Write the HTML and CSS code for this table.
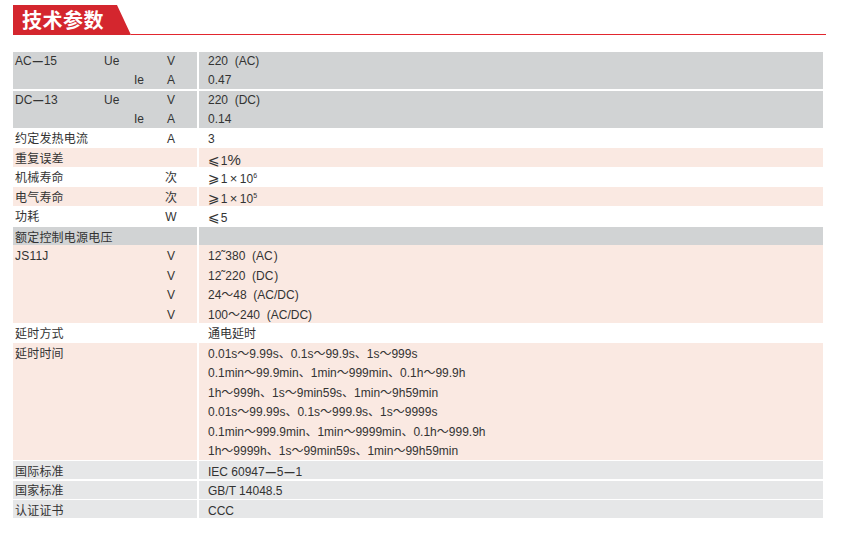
FILE: index.html
```html
<!DOCTYPE html>
<html lang="zh">
<head>
<meta charset="utf-8">
<title>技术参数</title>
<link rel="stylesheet" href="styles.css">
</head>
<body>
<div class="page">
  <div class="head">
    <div class="tab">技术参数</div>
    <div class="rule"></div>
  </div>

  <div class="table">
    <div class="grp grey pair">
      <div class="l">
        <div class="ln"><span class="c1">AC<span class="dash">—</span>15</span><span class="c2">Ue</span><span class="c3"></span><span class="u">V</span></div>
        <div class="ln"><span class="c1"></span><span class="c2"></span><span class="c3">Ie</span><span class="u">A</span></div>
      </div>
      <div class="r">
        <div class="ln">220&nbsp; (AC)</div>
        <div class="ln">0.47</div>
      </div>
    </div>

    <div class="grp grey pair gap">
      <div class="l">
        <div class="ln"><span class="c1">DC<span class="dash">—</span>13</span><span class="c2">Ue</span><span class="c3"></span><span class="u">V</span></div>
        <div class="ln"><span class="c1"></span><span class="c2"></span><span class="c3">Ie</span><span class="u">A</span></div>
      </div>
      <div class="r">
        <div class="ln">220&nbsp; (DC)</div>
        <div class="ln">0.14</div>
      </div>
    </div>

    <div class="grp white">
      <div class="l"><div class="ln"><span class="lab">约定发热电流</span><span class="u">A</span></div></div>
      <div class="r"><div class="ln">3</div></div>
    </div>

    <div class="grp pink">
      <div class="l"><div class="ln"><span class="lab">重复误差</span><span class="u"></span></div></div>
      <div class="r"><div class="ln"><span class="sym">⩽</span>1<span class="pct">%</span></div></div>
    </div>

    <div class="grp white">
      <div class="l"><div class="ln"><span class="lab">机械寿命</span><span class="u">次</span></div></div>
      <div class="r"><div class="ln"><span class="sym">⩾</span>1&#8201;<span class="times">×</span>&#8201;10<sup>6</sup></div></div>
    </div>

    <div class="grp pink">
      <div class="l"><div class="ln"><span class="lab">电气寿命</span><span class="u">次</span></div></div>
      <div class="r"><div class="ln"><span class="sym">⩾</span>1&#8201;<span class="times">×</span>&#8201;10<sup>5</sup></div></div>
    </div>

    <div class="grp white">
      <div class="l"><div class="ln"><span class="lab">功耗</span><span class="u">W</span></div></div>
      <div class="r"><div class="ln"><span class="sym">⩽</span>5</div></div>
    </div>

    <div class="grp grey topline">
      <div class="l"><div class="ln"><span class="lab">额定控制电源电压</span><span class="u"></span></div></div>
      <div class="r"><div class="ln"></div></div>
    </div>

    <div class="grp pink">
      <div class="l">
        <div class="ln"><span class="lab">JS11J</span><span class="u">V</span></div>
        <div class="ln"><span class="lab"></span><span class="u">V</span></div>
        <div class="ln"><span class="lab"></span><span class="u">V</span></div>
        <div class="ln"><span class="lab"></span><span class="u">V</span></div>
      </div>
      <div class="r">
        <div class="ln">12˜380&nbsp; (AC&#8202;)</div>
        <div class="ln">12˜220&nbsp; (DC&#8202;)</div>
        <div class="ln">24～48&nbsp; (AC/DC)</div>
        <div class="ln">100～240&nbsp; (AC/DC)</div>
      </div>
    </div>

    <div class="grp white">
      <div class="l"><div class="ln"><span class="lab">延时方式</span><span class="u"></span></div></div>
      <div class="r"><div class="ln">通电延时</div></div>
    </div>

    <div class="grp pink">
      <div class="l">
        <div class="ln"><span class="lab">延时时间</span><span class="u"></span></div>
      </div>
      <div class="r">
        <div class="ln">0.01s～9.99s、0.1s～99.9s、1s～999s</div>
        <div class="ln">0.1min～99.9min、1min～999min、0.1h～99.9h</div>
        <div class="ln">1h～999h、1s～9min59s、1min～9h59min</div>
        <div class="ln">0.01s～99.99s、0.1s～999.9s、1s～9999s</div>
        <div class="ln">0.1min～999.9min、1min～9999min、0.1h～999.9h</div>
        <div class="ln">1h～9999h、1s～99min59s、1min～99h59min</div>
      </div>
    </div>

    <div class="grp light std">
      <div class="l"><div class="ln"><span class="lab">国际标准</span><span class="u"></span></div></div>
      <div class="r"><div class="ln">IEC 60947<span class="dash">—</span>5<span class="dash">—</span>1</div></div>
    </div>
    <div class="grp light std">
      <div class="l"><div class="ln"><span class="lab">国家标准</span><span class="u"></span></div></div>
      <div class="r"><div class="ln">GB/T 14048.5</div></div>
    </div>
    <div class="grp light std">
      <div class="l"><div class="ln"><span class="lab">认证证书</span><span class="u"></span></div></div>
      <div class="r"><div class="ln">CCC</div></div>
    </div>
  </div>
</div>
</body>
</html>
```

FILE: styles.css
```css
html, body {
  margin: 0;
  padding: 0;
  background: #ffffff;
}

body {
  font-family: "Liberation Sans", "Noto Sans CJK SC", sans-serif;
  font-size: 12px;
  color: #333333;
}

.page {
  width: 846px;
  height: 546px;
  padding: 5px 0 0 13px;
  box-sizing: border-box;
}

.head {
  display: flex;
  align-items: flex-end;
  width: 813px;
  height: 30px;
}

.tab {
  width: 118px;
  height: 30px;
  background: #d4262e;
  clip-path: polygon(0 0, 104px 0, 118px 100%, 0 100%);
  color: #ffffff;
  font-family: "Noto Sans CJK SC", sans-serif;
  font-size: 20px;
  font-weight: 700;
  line-height: 30px;
  padding-left: 9px;
  box-sizing: border-box;
  letter-spacing: 0.5px;
}

.rule {
  flex: 1;
  height: 1px;
  background: #e2262e;
}

.table {
  width: 810px;
  margin-top: 17px;
  display: flex;
  flex-direction: column;
}

.grp {
  display: flex;
  gap: 2px;
}

.grp .l {
  width: 184px;
  padding-left: 2px;
  box-sizing: border-box;
}

.grp .r {
  flex: 1;
  padding-left: 9px;
}

.grey .l, .grey .r { background: #d1d3d4; }
.pink .l, .pink .r { background: #fae9e2; }
.light .l, .light .r { background: #e6e7e8; }

.ln {
  box-sizing: border-box;
  height: 19.5px;
  padding-top: 2px;
  line-height: 19px;
  white-space: nowrap;
}

.l .ln {
  display: grid;
  grid-template-columns: 89px 30px 29px 16px;
  grid-auto-rows: 17.5px;
}

.l .ln .lab {
  grid-column: 1 / 4;
  letter-spacing: 0.2px;
}

.u {
  text-align: center;
}

.pair .ln {
  height: 18.5px;
  padding-top: 1px;
  line-height: 17px;
}

.gap {
  margin-top: 2px;
}

.topline {
  padding-top: 1px;
}

.topline .ln {
  height: 18.5px;
}

.std {
  margin-top: 1.5px;
}

.std .ln {
  height: 18px;
  padding-top: 1.5px;
  line-height: 18px;
}

.dash {
  font-size: 10px;
  font-weight: 700;
  margin: 0 1px;
}

.sym {
  font-family: "DejaVu Sans", sans-serif;
  font-size: 14px;
  margin-right: 1px;
}

.times {
  font-size: 13px;
}

.pct {
  font-size: 15px;
}

sup {
  font-size: 7px;
  line-height: 0;
  vertical-align: 5px;
}
```
